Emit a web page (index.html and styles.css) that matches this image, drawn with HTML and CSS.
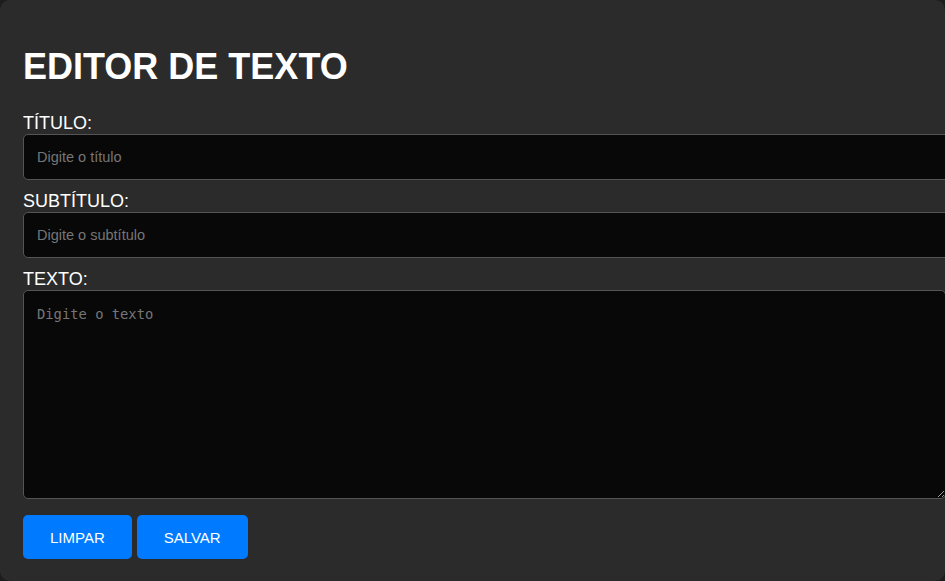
FILE: index.html
```html
<!DOCTYPE html>
<html lang="pt">
<head>
<meta charset="utf-8">
<title>Editor de Texto</title>
<link rel="stylesheet" href="styles.css">
</head>
<body>
<main class="card">
  <h1 class="title">EDITOR DE TEXTO</h1>
  <form class="form">
    <label class="label" for="titulo">TÍTULO:</label>
    <input class="field" id="titulo" type="text" placeholder="Digite o título">
    <label class="label" for="subtitulo">SUBTÍTULO:</label>
    <input class="field" id="subtitulo" type="text" placeholder="Digite o subtítulo">
    <label class="label" for="texto">TEXTO:</label>
    <textarea class="field area" id="texto" placeholder="Digite o texto"></textarea>
    <div class="actions">
      <button type="button" class="btn">LIMPAR</button>
      <button type="button" class="btn">SALVAR</button>
    </div>
  </form>
</main>
</body>
</html>
```
FILE: styles.css
```css
html, body {
  margin: 0;
  padding: 0;
  background: #1d1d1d;
  overflow: hidden;
}
body {
  font-family: "Liberation Sans", Arial, sans-serif;
  color: #fff;
}
.card {
  box-sizing: border-box;
  width: 100vw;
  height: 100vh;
  background: #2b2b2b;
  border-radius: 10px;
  padding: 46px 0 0 23px;
  overflow: hidden;
}
.title {
  margin: 0 0 26px;
  font-size: 36px;
  font-weight: bold;
  line-height: 41px;
}
.form {
  display: flex;
  flex-direction: column;
  align-items: flex-start;
}
.label {
  font-size: 18px;
  line-height: 21px;
}
.field {
  box-sizing: border-box;
  width: 940px;
  height: 46px;
  margin: 0 0 11px;
  padding: 14px 13px;
  background: #080808;
  border: 1px solid #555;
  border-radius: 5px;
  color: #ddd;
  font-family: "Liberation Sans", Arial, sans-serif;
  font-size: 14.5px;
  outline: none;
}
.field::placeholder {
  color: #767676;
}
.area {
  width: 923px;
  height: 209px;
  margin-bottom: 16px;
  padding: 15px 13px;
  font-family: "DejaVu Sans Mono", "Liberation Mono", monospace;
  font-size: 13.8px;
  resize: vertical;
}
.actions {
  display: flex;
  gap: 5px;
}
.btn {
  height: 44px;
  padding: 0 27px;
  border: none;
  border-radius: 5px;
  background: #007bff;
  color: #fff;
  font-family: "Liberation Sans", Arial, sans-serif;
  font-size: 15px;
  cursor: pointer;
}
```
